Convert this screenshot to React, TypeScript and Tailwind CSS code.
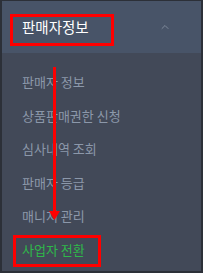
import { ChevronUp } from "lucide-react"

const items = ["판매자 정보", "상품판매권한 신청", "심사내역 조회", "판매자 등급", "매니저 관리"]

export default function App() {
  return (
    <div className="relative w-[203px] h-[273px] overflow-hidden border-2 border-t border-[#2c3038] bg-[#424958] font-['Noto_Sans_CJK_KR',sans-serif]">
      {/* header */}
      <div className="flex h-[52px] items-center justify-between bg-[#485468] pl-5 pr-[30px]">
        <span className="text-[14.5px] font-normal text-white">판매자정보</span>
        <ChevronUp className="h-[12px] w-[12px] text-[#7f8a9b]" strokeWidth={2} />
      </div>

      {/* menu */}
      <ul className="pt-[12px]">
        {items.map((item) => (
          <li key={item} className="flex h-[33.5px] items-center px-5 text-[13px] text-[#8c98aa]">
            {item}
          </li>
        ))}
        <li className="flex h-[33.5px] items-center px-5 text-[13px] text-[#2fb84a]">사업자 전환</li>
      </ul>

      {/* annotations */}
      <div className="absolute left-[8px] top-[13px] h-[32px] w-[104px] border-[3px] border-[#ff0000]" />
      <div className="absolute left-[11px] top-[234px] h-[32px] w-[88px] border-[3px] border-[#ff0000]" />
      <svg className="absolute left-0 top-0" width="203" height="273">
        <line x1="52.5" y1="66" x2="52.5" y2="214" stroke="#ff0000" strokeWidth="3" />
        <polygon points="47,210 58,210 52.5,219" fill="#ff0000" />
      </svg>
    </div>
  )
}
